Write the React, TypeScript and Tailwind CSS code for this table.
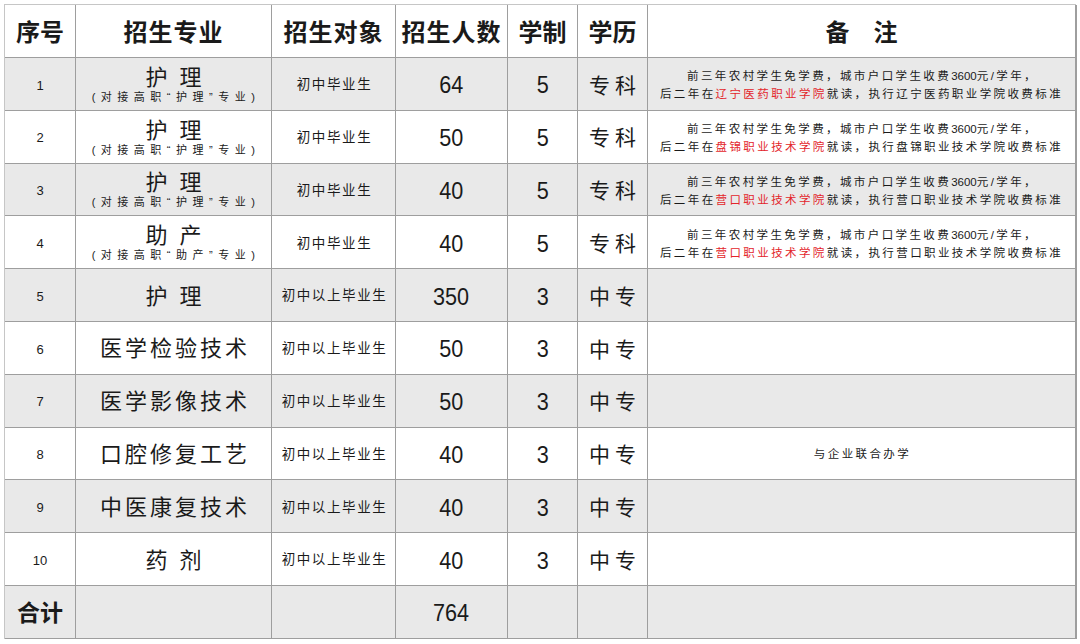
type Row = {
  no: string;
  major: string;
  sub?: string;
  target: string;
  count: string;
  years: string;
  level: string;
  school?: string;
  note?: string;
};

const rows: Row[] = [
  { no: '1', major: '护 理', sub: '(对接高职“护理”专业)', target: '初中毕业生', count: '64', years: '5', level: '专科', school: '辽宁医药职业学院' },
  { no: '2', major: '护 理', sub: '(对接高职“护理”专业)', target: '初中毕业生', count: '50', years: '5', level: '专科', school: '盘锦职业技术学院' },
  { no: '3', major: '护 理', sub: '(对接高职“护理”专业)', target: '初中毕业生', count: '40', years: '5', level: '专科', school: '营口职业技术学院' },
  { no: '4', major: '助 产', sub: '(对接高职“助产”专业)', target: '初中毕业生', count: '40', years: '5', level: '专科', school: '营口职业技术学院' },
  { no: '5', major: '护 理', target: '初中以上毕业生', count: '350', years: '3', level: '中专' },
  { no: '6', major: '医学检验技术', target: '初中以上毕业生', count: '50', years: '3', level: '中专' },
  { no: '7', major: '医学影像技术', target: '初中以上毕业生', count: '50', years: '3', level: '中专' },
  { no: '8', major: '口腔修复工艺', target: '初中以上毕业生', count: '40', years: '3', level: '中专', note: '与企业联合办学' },
  { no: '9', major: '中医康复技术', target: '初中以上毕业生', count: '40', years: '3', level: '中专' },
  { no: '10', major: '药 剂', target: '初中以上毕业生', count: '40', years: '3', level: '中专' },
];

const cell = 'flex items-center justify-center border-r border-b border-[#9e9e9e] pt-[3px] text-[#1a1a1a]';

function Num({ v }: { v: string }) {
  return <span className="inline-block scale-x-90 text-[24px] leading-none">{v}</span>;
}

function Note({ school }: { school: string }) {
  return (
    <div className="text-center text-[11.5px] leading-[18px] tracking-[2.4px]">
      <div className="pl-[2px]">
        前三年农村学生免学费，城市户口学生收费<span className="tracking-normal">3600</span>元/学年，
      </div>
      <div>
        后二年在<span className="text-[#e3262b]">{school}</span>就读，执行{school}收费标准
      </div>
    </div>
  );
}

export default function App() {
  return (
    <div className="h-[644px] w-[1080px] bg-white pl-[4px] pt-[4px] font-['Liberation_Sans','Noto_Sans_CJK_SC',sans-serif]">
      <div className="grid w-[1072px] grid-cols-[71px_196px_124px_112px_70px_70px_429px] grid-rows-[53px_repeat(11,52.8px)] border-t border-l border-[#c6c6c6]">
        <div className={`${cell} bg-white text-[24px] font-bold`}>序号</div>
        <div className={`${cell} bg-white text-[24px] font-bold tracking-[1px]`}>招生专业</div>
        <div className={`${cell} bg-white text-[24px] font-bold tracking-[1px]`}>招生对象</div>
        <div className={`${cell} bg-white text-[24px] font-bold tracking-[1px]`}>招生人数</div>
        <div className={`${cell} bg-white text-[24px] font-bold`}>学制</div>
        <div className={`${cell} bg-white text-[24px] font-bold`}>学历</div>
        <div className={`${cell} border-r-2 bg-white text-[24px] font-bold`}>备　注</div>

        {rows.map((r, i) => {
          const bg = i % 2 === 0 ? 'bg-[#e9e9e9]' : 'bg-white';
          return (
            <div key={r.no} className="contents">
              <div className={`${cell} ${bg} text-[13px]`}>{r.no}</div>
              <div className={`${cell} ${bg} flex-col`}>
                <span className={`${r.sub ? 'leading-[24px]' : 'leading-none'} pl-[3px] text-[22px] tracking-[3px]`}>{r.major}</span>
                {r.sub && <span className="pl-[5px] text-[11px] leading-[15px] tracking-[5.5px]">{r.sub}</span>}
              </div>
              <div className={`${cell} ${bg} pl-[2px] text-[13.5px] tracking-[1.6px]`}>{r.target}</div>
              <div className={`${cell} ${bg}`}><Num v={r.count} /></div>
              <div className={`${cell} ${bg}`}><Num v={r.years} /></div>
              <div className={`${cell} ${bg} pl-[5px] text-[21px] tracking-[5px]`}>{r.level}</div>
              <div className={`${cell} border-r-2 ${bg}`}>
                {r.school && <Note school={r.school} />}
                {r.note && <span className="pl-[2px] text-[11.5px] tracking-[2.4px]">{r.note}</span>}
              </div>
            </div>
          );
        })}

        <div className={`${cell} bg-[#e9e9e9] text-[23px] font-bold`}>合计</div>
        <div className={`${cell} bg-[#e9e9e9]`} />
        <div className={`${cell} bg-[#e9e9e9]`} />
        <div className={`${cell} bg-[#e9e9e9]`}><Num v="764" /></div>
        <div className={`${cell} bg-[#e9e9e9]`} />
        <div className={`${cell} bg-[#e9e9e9]`} />
        <div className={`${cell} border-r-2 bg-[#e9e9e9]`} />
      </div>
    </div>
  );
}
